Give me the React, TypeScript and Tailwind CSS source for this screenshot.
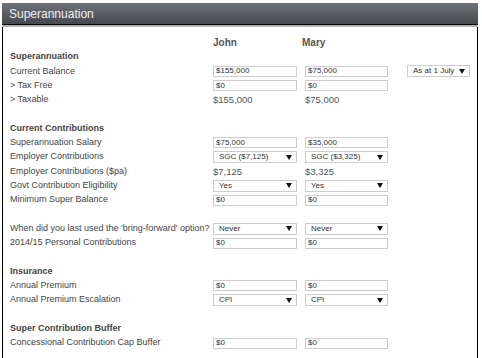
import React from "react";

type Cell =
  | { kind: "input"; value: string }
  | { kind: "select"; value: string }
  | { kind: "text"; value: string };

type Row =
  | { type: "section"; label: string }
  | { type: "blank" }
  | { type: "field"; label: string; john: Cell; mary: Cell; extra?: string };

const inp = (value: string): Cell => ({ kind: "input", value });
const sel = (value: string): Cell => ({ kind: "select", value });
const txt = (value: string): Cell => ({ kind: "text", value });

const rows: Row[] = [
  { type: "section", label: "Superannuation" },
  { type: "field", label: "Current Balance", john: inp("$155,000"), mary: inp("$75,000"), extra: "As at 1 July" },
  { type: "field", label: "> Tax Free", john: inp("$0"), mary: inp("$0") },
  { type: "field", label: "> Taxable", john: txt("$155,000"), mary: txt("$75,000") },
  { type: "blank" },
  { type: "section", label: "Current Contributions" },
  { type: "field", label: "Superannuation Salary", john: inp("$75,000"), mary: inp("$35,000") },
  { type: "field", label: "Employer Contributions", john: sel("SGC ($7,125)"), mary: sel("SGC ($3,325)") },
  { type: "field", label: "Employer Contributions ($pa)", john: txt("$7,125"), mary: txt("$3,325") },
  { type: "field", label: "Govt Contribution Eligibility", john: sel("Yes"), mary: sel("Yes") },
  { type: "field", label: "Minimum Super Balance", john: inp("$0"), mary: inp("$0") },
  { type: "blank" },
  { type: "field", label: "When did you last used the 'bring-forward' option?", john: sel("Never"), mary: sel("Never") },
  { type: "field", label: "2014/15 Personal Contributions", john: inp("$0"), mary: inp("$0") },
  { type: "blank" },
  { type: "section", label: "Insurance" },
  { type: "field", label: "Annual Premium", john: inp("$0"), mary: inp("$0") },
  { type: "field", label: "Annual Premium Escalation", john: sel("CPI"), mary: sel("CPI") },
  { type: "blank" },
  { type: "section", label: "Super Contribution Buffer" },
  { type: "field", label: "Concessional Contribution Cap Buffer", john: inp("$0"), mary: inp("$0") },
];

function Arrow() {
  return (
    <svg width="6" height="5" viewBox="0 0 6 5" className="shrink-0">
      <path d="M0 0h6L3 5z" fill="#111" />
    </svg>
  );
}

function Select({ value }: { value: string }) {
  return (
    <div className="h-[12px] border border-[#cdcdcd] bg-white pl-[5px] pr-[4px] flex items-center justify-between text-[8px] text-[#333] leading-none whitespace-nowrap">
      <span>{value}</span>
      <Arrow />
    </div>
  );
}

function Box({ cell }: { cell: Cell }) {
  if (cell.kind === "input") {
    return (
      <div className="h-[11px] border border-[#cdcdcd] bg-white pl-[2px] flex items-center text-[8px] text-[#333] leading-none">
        {cell.value}
      </div>
    );
  }
  if (cell.kind === "select") return <Select value={cell.value} />;
  return <div className="text-[9.5px] text-[#555] leading-none">{cell.value}</div>;
}

const cols = "grid grid-cols-[195px_84px_83px_74px] gap-x-[8px]";

export default function App() {
  return (
    <div className="w-[482px] h-[358px] bg-white overflow-hidden pl-[2px] pt-[3px] font-['Liberation_Sans',Arial,sans-serif]">
      <div className="w-[476px] h-[355px] flex flex-col">
        <div className="h-[21px] bg-gradient-to-b from-[#6e737b] to-[#454a51] flex items-center pl-[7px] text-[12px] text-[#f0f0f0]">
          Superannuation
        </div>
        <div className="h-[1px] bg-black" />
        <div className="h-[2px] bg-[#b4b4b4]" />
        <div className="flex-1 border-l border-r border-black pt-[8px] pl-[7px]">
          <div className={`${cols} h-[15px] items-center`}>
            <div />
            <div className="text-[10px] font-bold text-[#555]">John</div>
            <div className="text-[10px] font-bold text-[#555] -ml-[3px]">Mary</div>
            <div />
          </div>
          {rows.map((r, i) => {
            if (r.type === "blank") return <div key={i} className="h-[14.3px]" />;
            if (r.type === "section")
              return (
                <div key={i} className="h-[14.3px] flex items-center text-[9px] font-bold text-[#444]">
                  {r.label}
                </div>
              );
            return (
              <div key={i} className={`${cols} h-[14.3px] items-center`}>
                <div className="text-[9px] text-[#444] whitespace-nowrap">{r.label}</div>
                <Box cell={r.john} />
                <Box cell={r.mary} />
                <div className="pl-[11px]">{r.extra && <Select value={r.extra} />}</div>
              </div>
            );
          })}
        </div>
      </div>
    </div>
  );
}
